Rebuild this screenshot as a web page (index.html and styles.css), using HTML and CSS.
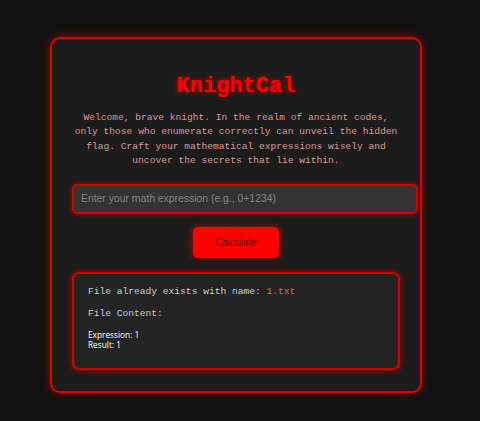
FILE: index.html
```
<!DOCTYPE html>
<html lang="en">
<head>
<meta charset="utf-8">
<title>KnightCal</title>
<link rel="stylesheet" href="styles.css">
</head>
<body>
<div class="card">
  <h1 class="title">KnightCal</h1>
  <p class="intro">Welcome, brave knight. In the realm of ancient codes, only those who enumerate correctly can unveil the hidden flag. Craft your mathematical expressions wisely and uncover the secrets that lie within.</p>
  <form class="calc-form">
    <input class="expr" type="text" placeholder="Enter your math expression (e.g., 0+1234)">
    <button class="calc-btn" type="button">Calculate</button>
  </form>
  <div class="result">
    <p class="res-line">File already exists with name: <span class="fname">1.txt</span></p>
    <p class="res-line">File Content:</p>
    <div class="content">Expression: 1<br>Result: 1</div>
  </div>
</div>
</body>
</html>
```

FILE: styles.css
```
* { box-sizing: border-box; }
html, body { margin: 0; padding: 0; }
body {
  background: #111111;
  width: 480px;
  height: 421px;
  overflow: hidden;
  font-family: "Courier New", "Liberation Mono", monospace;
}
.card {
  margin: 37px 0 0 50px;
  width: 372px;
  height: 356px;
  background: #1c1c1c;
  border: 2px solid #e00000;
  border-radius: 10px;
  box-shadow: 0 0 10px rgba(255, 0, 0, 0.5);
  padding: 34px 20px 20px;
}
.title {
  margin: 0;
  text-align: center;
  font-family: inherit;
  font-weight: bold;
  font-size: 22px;
  line-height: 27px;
  color: #ff0000;
  text-shadow: 0 0 5px rgba(255, 0, 0, 0.8);
}
.intro {
  margin: 11px 0 0;
  text-align: center;
  font-size: 9.6px;
  line-height: 14.4px;
  color: #d99a9a;
}
.calc-form {
  display: flex;
  flex-direction: column;
  align-items: center;
  margin-top: 15px;
}
.expr {
  align-self: flex-start;
  box-sizing: content-box;
  width: 100%;
  height: 26px;
  padding: 0 7px;
  margin: 0;
  background: #333333;
  border: 2px solid #d00000;
  border-radius: 5px;
  box-shadow: 0 0 5px rgba(255, 0, 0, 0.6);
  color: #dddddd;
  font-family: "Liberation Sans", Arial, sans-serif;
  font-size: 10.4px;
  outline: none;
}
.expr::placeholder { color: #858585; }
.calc-btn {
  margin-top: 13px;
  width: 86px;
  height: 31px;
  background: #ff0000;
  border: none;
  border-radius: 5px;
  box-shadow: 0 0 7px rgba(255, 0, 0, 0.7);
  color: #6e0000;
  font-family: "Liberation Sans", Arial, sans-serif;
  font-size: 10px;
  padding: 0;
}
.result {
  margin-top: 14px;
  height: 98px;
  background: #242424;
  border: 2px solid #d00000;
  border-radius: 7px;
  box-shadow: 0 0 7px rgba(255, 0, 0, 0.6);
  padding: 12px 14px;
}
.res-line {
  margin: 0 0 11px;
  font-size: 9.6px;
  line-height: 11px;
  color: #cccccc;
}
.fname { color: #ff5555; }
.content {
  margin-top: 3px;
  font-family: "Open Sans", "Liberation Sans", Arial, sans-serif;
  font-size: 8.3px;
  line-height: 10px;
  color: #ffffff;
}
```
